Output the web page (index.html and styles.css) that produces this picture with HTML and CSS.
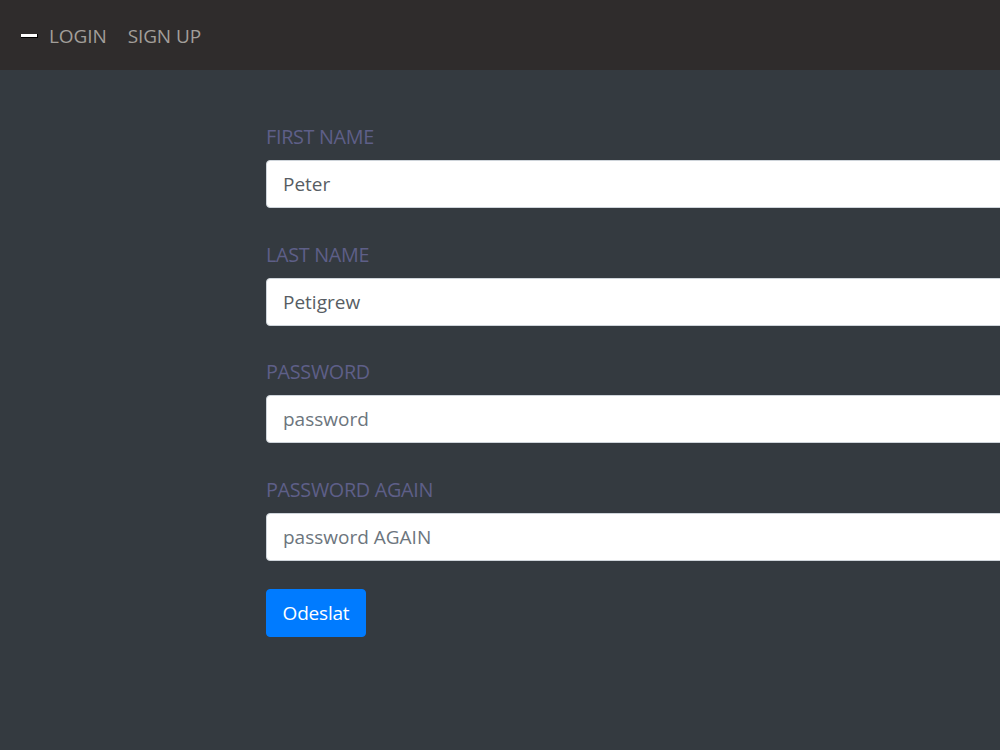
FILE: index.html
```html
<!DOCTYPE html>
<html>
<head>
<meta charset="utf-8">
<link rel="stylesheet" href="styles.css">
</head>
<body>
<nav class="navbar">
  <span class="nav-icon"></span>
  <a class="nav-link" href="#">LOGIN</a>
  <a class="nav-link" href="#">SIGN UP</a>
</nav>
<main class="content">
  <form class="signup">
    <div class="form-group">
      <label class="field-label">FIRST NAME</label>
      <input class="form-control" type="text" value="Peter">
    </div>
    <div class="form-group">
      <label class="field-label">LAST NAME</label>
      <input class="form-control" type="text" value="Petigrew">
    </div>
    <div class="form-group">
      <label class="field-label">PASSWORD</label>
      <input class="form-control" type="text" placeholder="password">
    </div>
    <div class="form-group last">
      <label class="field-label">PASSWORD AGAIN</label>
      <input class="form-control" type="text" placeholder="password AGAIN">
    </div>
    <button class="btn-submit" type="button">Odeslat</button>
  </form>
</main>
</body>
</html>
```

FILE: styles.css
```css
html, body {
  margin: 0;
  padding: 0;
  height: 100%;
  overflow: hidden;
}
body {
  background: #343a40;
  font-family: "Open Sans", "Noto Sans", sans-serif;
}
.navbar {
  height: 70px;
  background: #2f2c2c;
  display: flex;
  align-items: center;
  padding: 1px 21px 0;
  box-sizing: border-box;
}
.nav-icon {
  width: 16px;
  height: 3px;
  background: #ffffff;
  border-right: 1px solid #000;
  border-bottom: 1px solid #000;
  margin-right: 11px;
  margin-top: 1px;
}
.nav-link {
  color: #a29e9a;
  text-decoration: none;
  font-size: 19px;
  margin-right: 21px;
  letter-spacing: -0.1px;
}
.content {
  overflow: hidden;
  padding: 52px 0 0 266px;
}
.signup {
  width: 734px;
}
.form-group {
  margin-bottom: 31.7px;
}
.form-group.last {
  margin-bottom: 28px;
}
.field-label {
  display: block;
  color: #5e5f88;
  font-size: 19.8px;
  line-height: 30px;
  margin-bottom: 8px;
  letter-spacing: -0.3px;
}
.form-control {
  display: block;
  width: calc(100% + 20px);
  height: 48px;
  box-sizing: border-box;
  border: 1px solid #ced4da;
  border-radius: 4px;
  background: #fff;
  padding: 8px 16px;
  font-family: inherit;
  font-size: 19px;
  color: #575d63;
  outline: none;
}
.form-control::placeholder {
  color: #6c757d;
  opacity: 1;
}
.btn-submit {
  display: block;
  height: 48px;
  width: 100px;
  border: 1px solid #007bff;
  background: #007bff;
  color: #fff;
  border-radius: 4px;
  font-family: inherit;
  font-size: 19px;
  padding: 0;
  letter-spacing: -0.2px;
}
```
